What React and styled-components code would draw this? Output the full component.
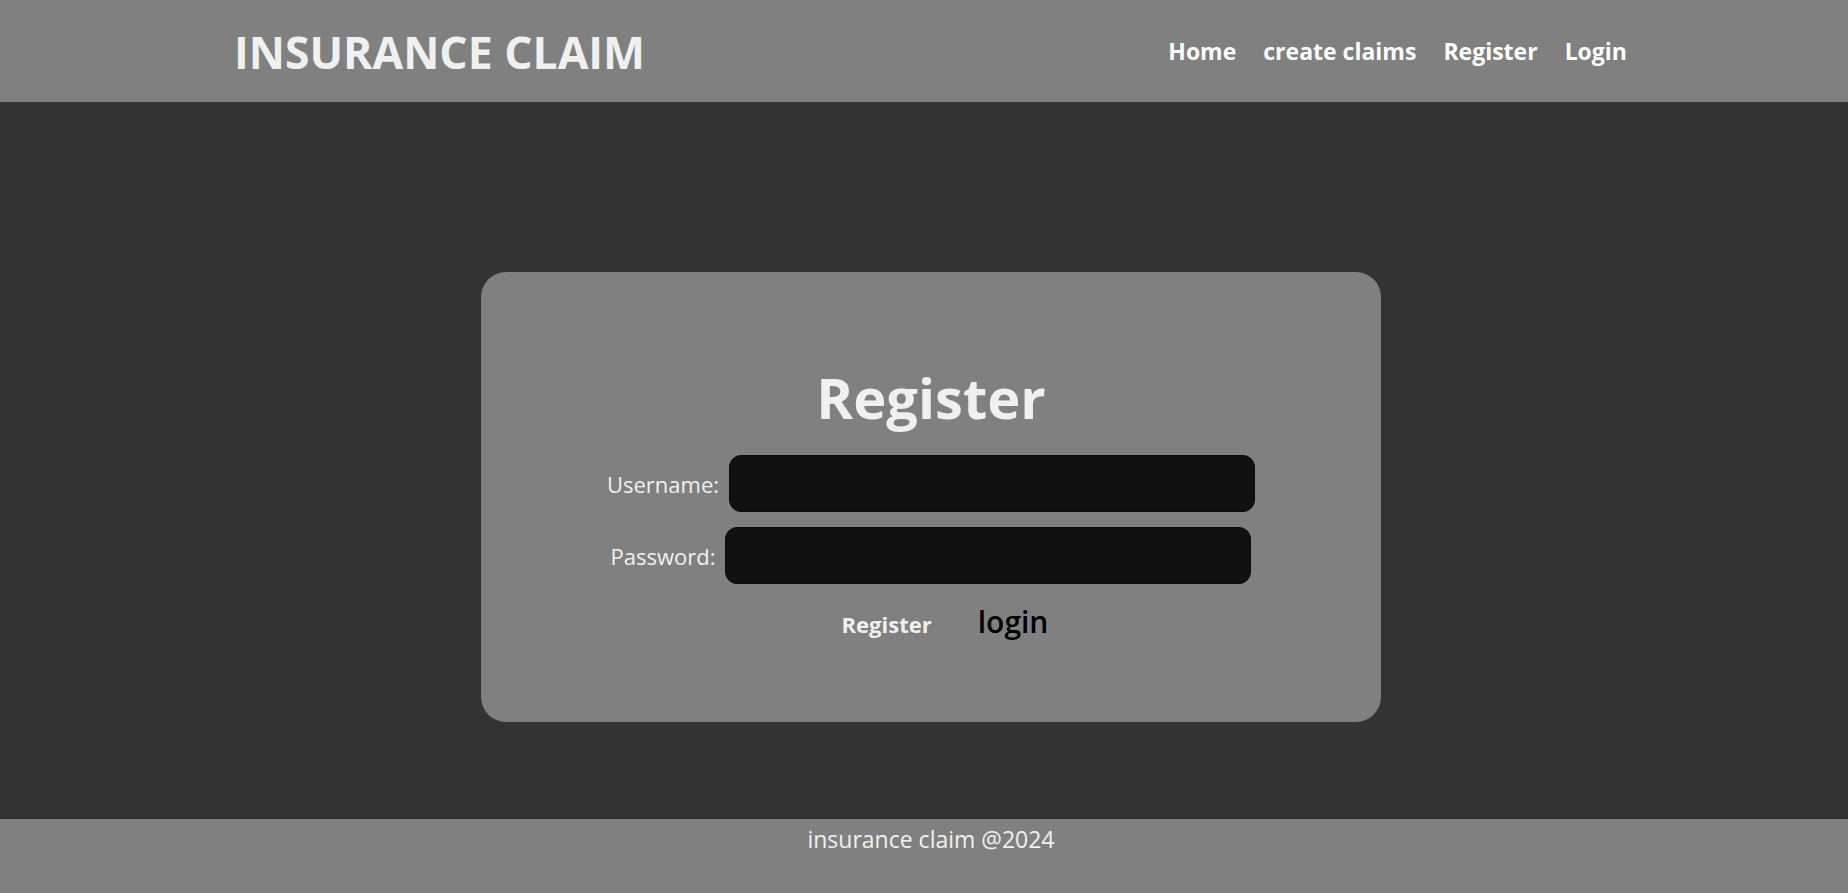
import React, { useState } from 'react';
import styled, { createGlobalStyle } from 'styled-components';

const GlobalStyle = createGlobalStyle`
  html, body {
    margin: 0;
    padding: 0;
    background-color: #333333;
    font-family: 'Open Sans', 'Noto Sans', sans-serif;
    color: #f0f0f0;
  }
`;

function App() {
  const [username, setUsername] = useState('');
  const [password, setPassword] = useState('');

  const handleSubmit = e => {
    e.preventDefault();
    setUsername('');
    setPassword('');
  };

  return (
    <>
      <GlobalStyle />
      <Header>
        <Title>INSURANCE CLAIM</Title>
        <Nav>
          <NavLink href="#">Home</NavLink>
          <NavLink href="#">create claims</NavLink>
          <NavLink href="#">Register</NavLink>
          <NavLink href="#">Login</NavLink>
        </Nav>
      </Header>
      <Main>
        <Card onSubmit={handleSubmit}>
          <Heading>Register</Heading>
          <Row>
            <Label htmlFor="username">Username:</Label>
            <Input
              id="username"
              type="text"
              value={username}
              onChange={e => setUsername(e.target.value)}
            />
          </Row>
          <Row>
            <Label htmlFor="password">Password:</Label>
            <Input
              id="password"
              type="password"
              value={password}
              onChange={e => setPassword(e.target.value)}
            />
          </Row>
          <Actions>
            <SubmitButton type="submit">Register</SubmitButton>
            <LoginLink href="#">login</LoginLink>
          </Actions>
        </Card>
      </Main>
      <Footer>insurance claim @2024</Footer>
    </>
  );
}

const Header = styled.header`
  display: flex;
  justify-content: space-between;
  align-items: center;
  height: 102px;
  padding: 0 221px 0 234px;
  background-color: #808080;
`;

const Title = styled.h1`
  margin: 0;
  font-size: 44.5px;
  font-weight: 700;
  color: #f0f0f0;
`;

const Nav = styled.nav`
  display: flex;
  gap: 27px;
`;

const NavLink = styled.a`
  font-size: 23px;
  font-weight: 700;
  color: #ffffff;
  text-decoration: none;
`;

const Main = styled.main`
  display: flex;
  justify-content: center;
  padding: 170px 0 97px 14px;
`;

const Card = styled.form`
  box-sizing: border-box;
  display: flex;
  flex-direction: column;
  align-items: center;
  width: 900px;
  height: 450px;
  padding-top: 90px;
  background-color: #808080;
  border-radius: 25px;
`;

const Heading = styled.h2`
  margin: 0 0 23px;
  font-size: 56px;
  line-height: 70px;
  font-weight: 700;
  color: #f0f0f0;
`;

const Row = styled.div`
  display: flex;
  align-items: center;
  gap: 10px;
  margin-bottom: 15px;
`;

const Label = styled.label`
  font-size: 22px;
  color: #f0f0f0;
`;

const Input = styled.input`
  box-sizing: border-box;
  width: 526px;
  height: 57px;
  padding: 0 14px;
  background-color: #111111;
  color: #f0f0f0;
  border: 1px solid #0b0b0b;
  border-radius: 12px;
  font-size: 20px;
  outline: none;
`;

const Actions = styled.div`
  display: flex;
  align-items: baseline;
  gap: 46px;
  margin: 2px 0 0 28px;
`;

const SubmitButton = styled.button`
  padding: 0;
  background: none;
  border: none;
  font-family: inherit;
  font-size: 22px;
  font-weight: 700;
  color: #f0f0f0;
  cursor: pointer;
`;

const LoginLink = styled.a`
  font-size: 30px;
  font-weight: 600;
  color: #000000;
  text-decoration: none;
`;

const Footer = styled.footer`
  box-sizing: border-box;
  height: 74px;
  padding: 4px 0 0 14px;
  background-color: #808080;
  text-align: center;
  font-size: 23px;
  color: #f0f0f0;
`;

export default App;
